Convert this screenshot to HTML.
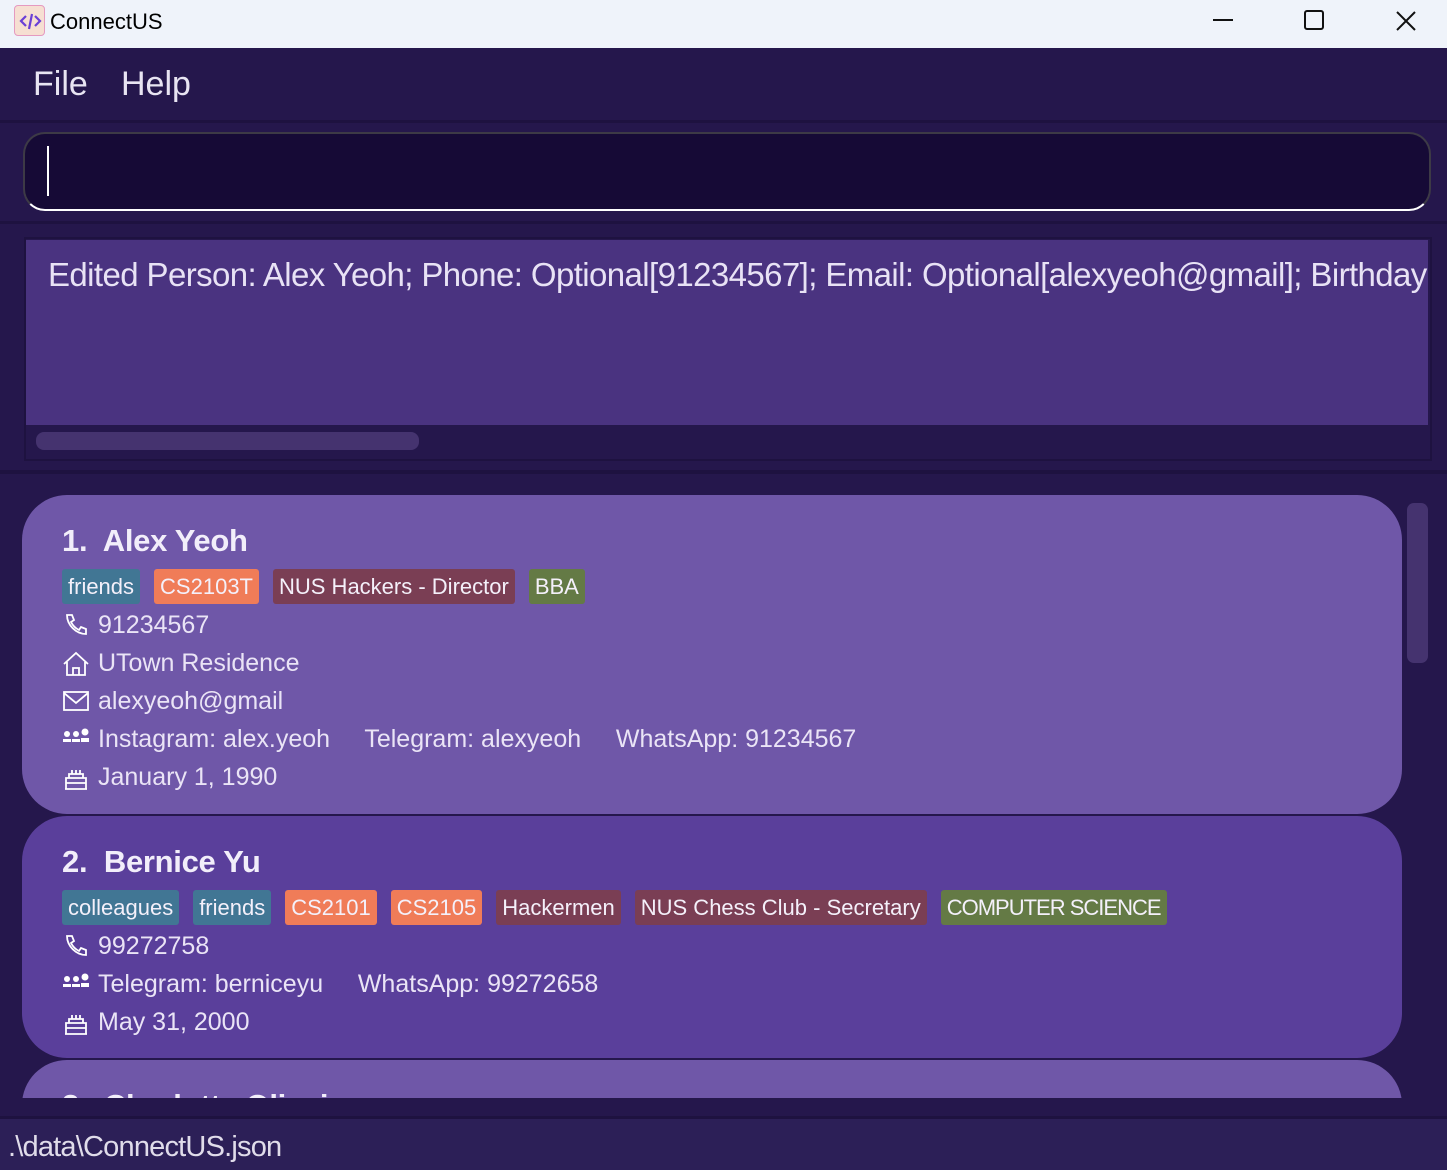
<!DOCTYPE html>
<html><head><meta charset="utf-8"><style>
*{margin:0;padding:0;box-sizing:border-box}
html,body{width:1447px;height:1170px;overflow:hidden}
body{background:#25174c;font-family:"Liberation Sans",sans-serif;position:relative;color:#eae4f6}
.abs{position:absolute}
.title{left:0;top:0;width:1447px;height:48px;background:#eff3fa;color:#000}
.menu{top:48px;left:0;width:1447px;height:72px;background:#25174c}
.card{position:absolute;left:22px;width:1380px;border-radius:45px}
.name{position:absolute;left:40px;font-size:31px;color:#f2eefa;font-weight:bold;letter-spacing:-0.3px}
.tags{position:absolute;left:40px;display:flex;gap:14px}
.tag{height:35px;line-height:35px;padding:0 6px;font-size:22px;border-radius:3px;color:#f4f0fa}
.f{background:#417694}.o{background:#f07c58}.m{background:#7a3e54}.g{background:#647a45}
.row{position:absolute;left:40px;font-size:25px;display:flex;align-items:center;gap:8px;white-space:pre}
.row svg{width:28px;height:28px}
</style></head><body>
<div class="abs title">
 <div class="abs" style="left:14px;top:5px;width:31px;height:31px;border-radius:4px;background:#f6dfd2;border:1px solid #e59ac0"><svg width="31" height="31" viewBox="0 0 31 31"><path d="M11 10l-5 5 5 5M20 10l5 5-5 5M17 8l-3 15" stroke="#6a3fd6" stroke-width="2.2" fill="none"/></svg></div>
 <div class="abs" style="left:50px;top:9px;font-size:22px">ConnectUS</div>
 <svg class="abs" style="left:1210px;top:8px" width="220" height="26"><path d="M3 12h20" stroke="#111" stroke-width="2"/><rect x="95" y="3" width="18" height="18" rx="2" stroke="#111" stroke-width="2" fill="none"/><path d="M187 4l18 18M205 4l-18 18" stroke="#111" stroke-width="2"/></svg>
</div>
<div class="abs menu"><span class="abs" style="left:33px;top:17px;font-size:34px;color:#e8e4f2">File</span><span class="abs" style="left:121px;top:17px;font-size:34px;color:#e8e4f2">Help</span></div>
<div class="abs" style="top:120px;left:0;width:1447px;height:3px;background:#1e1240"></div>
<div class="abs" style="left:23px;top:132px;width:1408px;height:79px;background:#160a36;border-radius:22px;border:2px solid #3d3a46;border-bottom-color:#fff"></div>
<div class="abs" style="left:47px;top:146px;width:2px;height:50px;background:#fff"></div>
<div class="abs" style="top:221px;left:0;width:1447px;height:3px;background:#1e1240"></div>
<div class="abs" style="left:24px;top:237px;width:1408px;height:224px;border:2px solid #1e1240"></div>
<div class="abs" style="left:26px;top:240px;width:1402px;height:185px;background:#4a3380;overflow:hidden"><div style="position:absolute;left:22px;top:16px;font-size:33px;white-space:nowrap;color:#e8e2f5;letter-spacing:-0.6px">Edited Person: Alex Yeoh; Phone: Optional[91234567]; Email: Optional[alexyeoh@gmail]; Birthday</div></div>
<div class="abs" style="left:36px;top:432px;width:383px;height:18px;border-radius:8px;background:#45336f"></div>
<div class="abs" style="top:470px;left:0;width:1447px;height:4px;background:#1e1240"></div>
<div class="abs" style="left:1407px;top:503px;width:21px;height:160px;border-radius:7px;background:#45336f"></div>
<div class="abs" style="left:0;top:474px;width:1447px;height:624px;overflow:hidden">
<div class="card" style="top:21px;height:319px;background:#6f57a8">
 <div class="name" style="top:28px">1.&nbsp; Alex Yeoh</div>
 <div class="tags" style="top:74px"><span class="tag f">friends</span><span class="tag o">CS2103T</span><span class="tag m">NUS Hackers - Director</span><span class="tag g">BBA</span></div>
 <div class="row" style="top:116px"><svg viewBox="0 0 28 28"><path d="M5 3l5 0 2 5-3 2c2 4 4 6 8 8l2-3 5 2v5c-10 0-19-9-19-19z" stroke="#fff" stroke-width="1.8" fill="none"/></svg>91234567</div>
 <div class="row" style="top:154px"><svg viewBox="0 0 28 28"><path d="M2 14L14 3l12 11M5 12v13h18V12M11 25v-7h6v7" stroke="#fff" stroke-width="1.8" fill="none"/></svg>UTown Residence</div>
 <div class="row" style="top:192px"><svg viewBox="0 0 28 28"><rect x="2" y="4" width="24" height="18" stroke="#fff" stroke-width="1.8" fill="none"/><path d="M2 5l12 10 12-10" stroke="#fff" stroke-width="1.8" fill="none"/></svg>alexyeoh@gmail</div>
 <div class="row" style="top:230px"><svg viewBox="0 0 28 28"><circle cx="5" cy="8" r="3" fill="#fff"/><circle cx="14" cy="8" r="3" fill="#fff"/><circle cx="23" cy="6" r="3.5" fill="#fff"/><path d="M1 16h8v-3H1zM10 16h8v-3h-8zM19 16h8v-4h-8z" fill="#fff"/></svg>Instagram: alex.yeoh     Telegram: alexyeoh     WhatsApp: 91234567</div>
 <div class="row" style="top:268px"><svg viewBox="0 0 28 28"><path d="M3 25h22M4 25V14h20v11M4 19h20M7 14v-4h14v4M10 10V6M14 10V6M18 10V6" stroke="#fff" stroke-width="1.8" fill="none"/></svg>January 1, 1990</div>
</div>
<div class="card" style="top:342px;height:242px;background:#5a3f9b">
 <div class="name" style="top:28px">2.&nbsp; Bernice Yu</div>
 <div class="tags" style="top:74px"><span class="tag f">colleagues</span><span class="tag f">friends</span><span class="tag o">CS2101</span><span class="tag o">CS2105</span><span class="tag m">Hackermen</span><span class="tag m">NUS Chess Club - Secretary</span><span class="tag g" style="letter-spacing:-1px">COMPUTER SCIENCE</span></div>
 <div class="row" style="top:116px"><svg viewBox="0 0 28 28"><path d="M5 3l5 0 2 5-3 2c2 4 4 6 8 8l2-3 5 2v5c-10 0-19-9-19-19z" stroke="#fff" stroke-width="1.8" fill="none"/></svg>99272758</div>
 <div class="row" style="top:154px"><svg viewBox="0 0 28 28"><circle cx="5" cy="8" r="3" fill="#fff"/><circle cx="14" cy="8" r="3" fill="#fff"/><circle cx="23" cy="6" r="3.5" fill="#fff"/><path d="M1 16h8v-3H1zM10 16h8v-3h-8zM19 16h8v-4h-8z" fill="#fff"/></svg>Telegram: berniceyu     WhatsApp: 99272658</div>
 <div class="row" style="top:192px"><svg viewBox="0 0 28 28"><path d="M3 25h22M4 25V14h20v11M4 19h20M7 14v-4h14v4M10 10V6M14 10V6M18 10V6" stroke="#fff" stroke-width="1.8" fill="none"/></svg>May 31, 2000</div>
</div>
<div class="card" style="top:586px;height:200px;background:#6f57a8">
 <div class="name" style="top:28px">3.&nbsp; Charlotte Oliveiro</div>
</div>
</div>
<div class="abs" style="top:1116px;left:0;width:1447px;height:3px;background:#1e1240"></div>
<div class="abs" style="top:1119px;left:0;width:1447px;height:51px;background:#2c1f57;overflow:hidden"><span class="abs" style="left:8px;top:12px;font-size:29px;color:#e0dcea;letter-spacing:-0.8px">.\data\ConnectUS.json</span></div>
</body></html>
